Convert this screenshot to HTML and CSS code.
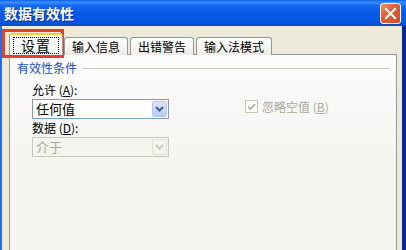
FILE: index.html
```html
<!DOCTYPE html>
<html lang="zh">
<head>
<meta charset="utf-8">
<title>数据有效性</title>
<link rel="stylesheet" href="styles.css">
</head>
<body>
<div class="window">
  <div class="titlebar">
    <span class="title">数据有效性</span>
    <span class="close">
      <svg width="13" height="13" viewBox="0 0 13 13"><path d="M2 2 L11 11 M11 2 L2 11" stroke="#fff" stroke-width="2" stroke-linecap="square"/></svg>
    </span>
  </div>
  <div class="body">
    <div class="tabs">
      <div class="tab active"><span class="focus">设置</span></div>
      <div class="tab">输入信息</div>
      <div class="tab">出错警告</div>
      <div class="tab">输入法模式</div>
    </div>
    <div class="panel">
      <div class="group-head">
        <span class="group-title">有效性条件</span>
        <span class="group-line"></span>
      </div>
      <div class="group-body">
        <div class="col">
          <div class="label">允许 (<u>A</u>):</div>
          <div class="select">
            <span class="value">任何值</span>
            <span class="drop"><svg width="9" height="6" viewBox="0 0 9 6"><path d="M1 1 L4.5 4.5 L8 1" fill="none" stroke="#4D6185" stroke-width="2"/></svg></span>
          </div>
          <div class="label">数据 (<u>D</u>):</div>
          <div class="select disabled">
            <span class="value">介于</span>
            <span class="drop"><svg width="9" height="6" viewBox="0 0 9 6"><path d="M1 1 L4.5 4.5 L8 1" fill="none" stroke="#C9C7BA" stroke-width="2"/></svg></span>
          </div>
        </div>
        <div class="check-row">
          <span class="checkbox"><svg width="9" height="8" viewBox="0 0 9 8"><path d="M1 3.5 L3.5 6 L8 1" fill="none" stroke="#ACA899" stroke-width="1.6"/></svg></span>
          <span class="check-label">忽略空值 (<u>B</u>)</span>
        </div>
      </div>
    </div>
  </div>
  <div class="highlight"></div>
</div>
</body>
</html>
```
FILE: styles.css
```css
* { box-sizing: border-box; }
html, body { margin: 0; padding: 0; }
body {
  width: 406px;
  height: 250px;
  overflow: hidden;
  font-family: "Noto Sans CJK SC", "Noto Sans", sans-serif;
  font-size: 12px;
  background: #ECE9D8;
}
.window {
  position: relative;
  width: 406px;
  height: 250px;
  display: flex;
  flex-direction: column;
}
.titlebar {
  height: 26px;
  flex: none;
  display: flex;
  align-items: center;
  justify-content: space-between;
  padding: 0 5px 0 4px;
  background: linear-gradient(to bottom, #0A5FE6 0%, #3B8FFB 8%, #1468F0 22%, #0859E6 50%, #0556E2 85%, #0449C9 100%);
}
.title {
  color: #fff;
  font-weight: bold;
  font-size: 14px;
  line-height: 14px;
  text-shadow: 1px 1px 0 #0B2C8E;
  letter-spacing: 0;
}
.close {
  width: 21px;
  height: 21px;
  border: 1px solid #fff;
  border-radius: 3px;
  background: linear-gradient(135deg, #F09070 0%, #E06038 40%, #D04A24 100%);
  display: flex;
  align-items: center;
  justify-content: center;
}
.body {
  flex: 1;
  display: flex;
  flex-direction: column;
  padding: 9px 5px 0 7px;
  border-left: 2px solid #2F6BE0;
  border-right: 4px solid #0A2A8A;
  box-shadow: inset -1px 0 0 #D8E4F8;
}
.tabs {
  display: flex;
  align-items: flex-end;
  height: 20px;
  padding-left: 0;
  position: relative;
  z-index: 1;
  margin-bottom: -1px;
}
.tab {
  height: 18px;
  padding: 0 7px;
  margin-left: 2px;
  border: 1px solid #919B9C;
  border-bottom: none;
  border-radius: 3px 3px 0 0;
  background: linear-gradient(to bottom, #FFFFFF, #ECEBE6);
  line-height: 17px;
  color: #000;
  white-space: nowrap;
}
.tab.active {
  height: 22px;
  margin-left: 0;
  margin-right: 1px;
  padding: 2px 3px 0;
  background: #FCFCFE;
  border-top: 2px solid #FFC83C;
  font-size: 14px;
  line-height: 15px;
}
.tab.active + .tab { margin-left: 0; }
.focus {
  display: block;
  border: 1px dotted #000;
  padding: 0 7px;
  letter-spacing: 1px;
}
.panel {
  flex: 1;
  border: 1px solid #919B9C;
  border-bottom: none;
  background: linear-gradient(to bottom, #FCFCFE 0%, #F4F3EE 60%, #F4F3EE 100%);
  padding: 6px 6px 0 7px;
}
.group-head {
  display: flex;
  align-items: center;
  height: 14px;
}
.group-title {
  color: #1C4EC8;
  line-height: 14px;
  margin-right: 5px;
}
.group-line {
  flex: 1;
  height: 1px;
  background: #D0D0BF;
  margin-top: 1px;
}
.group-body {
  display: flex;
  padding: 8px 0 0 15px;
}
.col {
  width: 137px;
  display: flex;
  flex-direction: column;
}
.label {
  line-height: 14px;
  height: 14px;
  color: #000;
}
.select {
  height: 20px;
  margin: 2px 0 2px;
  border: 1px solid #7F9DB9;
  background: #fff;
  display: flex;
  align-items: center;
  justify-content: space-between;
  padding: 0 1px 0 3px;
  font-size: 13px;
}
.select .value { line-height: 16px; }
.drop {
  width: 15px;
  height: 16px;
  border: 1px solid #B5C8F3;
  border-radius: 2px;
  background: linear-gradient(to bottom, #DCE6FC, #B7CBF7);
  display: flex;
  align-items: center;
  justify-content: center;
}
.select.disabled {
  background: #F4F3EE;
  border-color: #C9C7BA;
  color: #ACA899;
}
.select.disabled .drop {
  background: #F4F3EE;
  border-color: #E0DFD8;
}
.check-row {
  display: flex;
  align-items: center;
  margin: 17px 0 0 76px;
  height: 13px;
  color: #ACA899;
}
.checkbox {
  width: 13px;
  height: 13px;
  border: 1px solid #C9C7BA;
  background: #fff;
  display: flex;
  align-items: center;
  justify-content: center;
  margin-right: 4px;
}
.check-label { line-height: 13px; }
.highlight {
  position: absolute;
  left: 2px;
  top: 29px;
  width: 62px;
  height: 29px;
  border: 3px solid #E4402A;
}
```
